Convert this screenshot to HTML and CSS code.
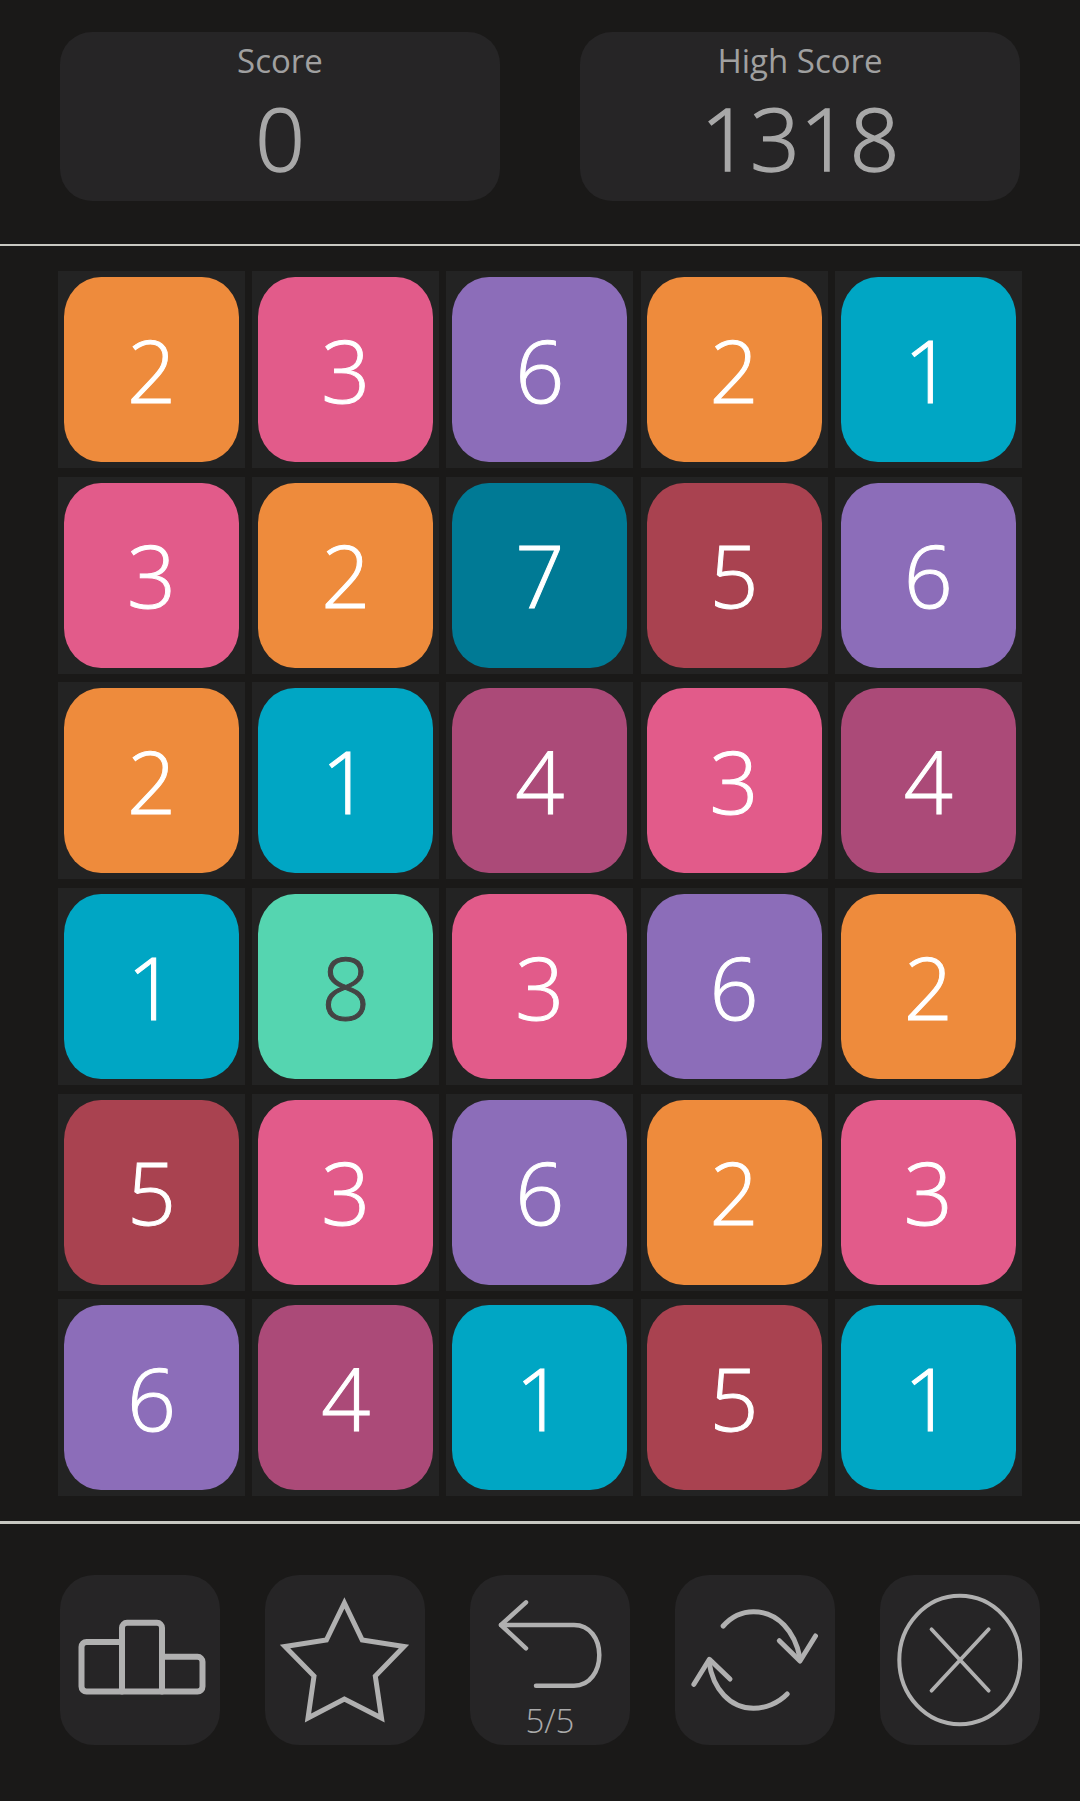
FILE: index.html
```html
<!DOCTYPE html>
<html lang="en">
<head>
    <meta charset="UTF-8">
    <meta name="viewport" content="width=device-width, initial-scale=1.0">
    <title>Merge Numbers</title>
    <link rel="stylesheet" href="styles.css">
</head>
<body>
    <header class="scores">
        <div class="score-card">
            <div class="score-label">Score</div>
            <div class="score-value">0</div>
        </div>
        <div class="score-card">
            <div class="score-label">High Score</div>
            <div class="score-value">1318</div>
        </div>
    </header>

    <main class="board">
        <div class="cell"><div class="tile t2">2</div></div>
        <div class="cell"><div class="tile t3">3</div></div>
        <div class="cell"><div class="tile t6">6</div></div>
        <div class="cell"><div class="tile t2">2</div></div>
        <div class="cell"><div class="tile t1">1</div></div>

        <div class="cell"><div class="tile t3">3</div></div>
        <div class="cell"><div class="tile t2">2</div></div>
        <div class="cell"><div class="tile t7">7</div></div>
        <div class="cell"><div class="tile t5">5</div></div>
        <div class="cell"><div class="tile t6">6</div></div>

        <div class="cell"><div class="tile t2">2</div></div>
        <div class="cell"><div class="tile t1">1</div></div>
        <div class="cell"><div class="tile t4">4</div></div>
        <div class="cell"><div class="tile t3">3</div></div>
        <div class="cell"><div class="tile t4">4</div></div>

        <div class="cell"><div class="tile t1">1</div></div>
        <div class="cell"><div class="tile t8">8</div></div>
        <div class="cell"><div class="tile t3">3</div></div>
        <div class="cell"><div class="tile t6">6</div></div>
        <div class="cell"><div class="tile t2">2</div></div>

        <div class="cell"><div class="tile t5">5</div></div>
        <div class="cell"><div class="tile t3">3</div></div>
        <div class="cell"><div class="tile t6">6</div></div>
        <div class="cell"><div class="tile t2">2</div></div>
        <div class="cell"><div class="tile t3">3</div></div>

        <div class="cell"><div class="tile t6">6</div></div>
        <div class="cell"><div class="tile t4">4</div></div>
        <div class="cell"><div class="tile t1">1</div></div>
        <div class="cell"><div class="tile t5">5</div></div>
        <div class="cell"><div class="tile t1">1</div></div>
    </main>

    <footer class="toolbar">
        <button class="tool" type="button" aria-label="Leaderboard">
            <svg class="icon" viewBox="0 0 160 170">
                <path stroke-width="6" d="M62 67H26.500a5 5 0 0 0-5 5v39.500a5 5 0 0 0 5 5h111a5 5 0 0 0 5-5V86.800a5 5 0 0 0-5-5h-35.500"/>
                <path stroke-width="6" d="M62 116.500V52.800a5 5 0 0 1 5-5h30a5 5 0 0 1 5 5v63.700"/>
            </svg>
        </button>
        <button class="tool" type="button" aria-label="Favourite">
            <svg class="icon icon-star" viewBox="0 0 160 170">
                <path stroke-width="5" d="M79.400 28 97.200 65 139 71.500 110.300 101 116.500 143 79.400 124 43 143 49 101 20 71.500 61.400 65Z"/>
            </svg>
        </button>
        <button class="tool tool-undo" type="button" aria-label="Undo">
            <svg class="icon icon-undo" viewBox="0 0 160 126">
                <path stroke-width="4.500" d="M66 110.700H104C120 110.700 129.300 96 129.300 80S120 50 104 50H31"/>
                <path stroke-width="4.500" d="M56 27.300 31 50 56 73.300"/>
            </svg>
            <span class="tool-count">5/5</span>
        </button>
        <button class="tool" type="button" aria-label="Restart">
            <svg class="icon" viewBox="0 0 160 170">
                <path stroke-width="5" d="M48.200 51C57 41 68 36.700 78.500 36.700 103 36.700 120 57 125 83"/>
                <path stroke-width="5" d="M104.300 65.700 125 86 140.500 61"/>
                <path stroke-width="5" d="M112.200 119C103 128.500 90 133.300 78.500 133.300 55 133.300 38 114 34 87"/>
                <path stroke-width="5" d="M18.900 109.300 34.400 84.300 55 104"/>
            </svg>
        </button>
        <button class="tool" type="button" aria-label="Quit">
            <svg class="icon" viewBox="0 0 160 170">
                <ellipse stroke-width="4" cx="79.800" cy="85" rx="60.500" ry="64.200"/>
                <path stroke-width="3.800" d="M51.500 54.300 108.700 115.700M108.700 54.300 51.500 115.700"/>
            </svg>
        </button>
    </footer>
</body>
</html>
```

FILE: styles.css
```css
* {
    box-sizing: border-box;
}
body {
    font-family: "Open Sans", sans-serif;
    font-weight: 300;
    background-color: #1a1918;
    margin: 0;
    width: 1080px;
    height: 1801px;
    overflow: hidden;
}
.scores {
    display: flex;
    gap: 80px;
    padding: 32px 60px 43px;
    border-bottom: 2px solid #c8c8c2;
}
.score-card {
    width: 440px;
    height: 169px;
    padding-top: 7px;
    background-color: #262526;
    border-radius: 32px;
    color: #a8a8a8;
    text-align: center;
}
.score-label {
    color: #a0a0a0;
    font-size: 33px;
    font-weight: 400;
    line-height: 44px;
}
.score-value {
    margin-top: 4px;
    font-size: 87px;
    line-height: 100px;
    -webkit-text-stroke: 1.5px #a8a8a8;
}
.board {
    display: grid;
    grid-template-columns: repeat(5, 187px);
    grid-auto-rows: 197px;
    column-gap: 7.2px;
    row-gap: 8.6px;
    padding: 25.3px 0 24.7px 58px;
    border-bottom: 3px solid #c8c8c2;
}
.cell {
    padding: 6px;
    background-color: #232323;
}
.tile {
    display: flex;
    align-items: center;
    justify-content: center;
    height: 100%;
    border-radius: 37px / 40px;
    color: #fff;
    font-size: 86px;
    line-height: 1;
    -webkit-text-stroke: 1px currentColor;
}
.t1 { background-color: #00a6c4; }
.t2 { background-color: #ee8b3c; }
.t3 { background-color: #e25b8a; }
.t4 { background-color: #ab4a78; }
.t5 { background-color: #a94250; }
.t6 { background-color: #8c6db9; }
.t7 { background-color: #007a95; }
.t8 { background-color: #55d5b0; color: #444; }
.toolbar {
    display: flex;
    gap: 45px;
    padding: 51px 0 0 60px;
}
.tool {
    display: flex;
    flex-direction: column;
    align-items: center;
    width: 160px;
    height: 170px;
    padding: 0;
    border: none;
    background-color: #262526;
    border-radius: 34px;
    color: #aaa;
    font-family: inherit;
    font-weight: 300;
}
.icon {
    display: block;
    width: 160px;
    height: 170px;
    fill: none;
    stroke: #b0b0b0;
    stroke-linecap: round;
    stroke-linejoin: round;
}
.icon-star {
    stroke-linejoin: miter;
}
.icon-undo {
    height: 126px;
}
.tool-count {
    font-size: 33px;
    line-height: 40px;
}
```
